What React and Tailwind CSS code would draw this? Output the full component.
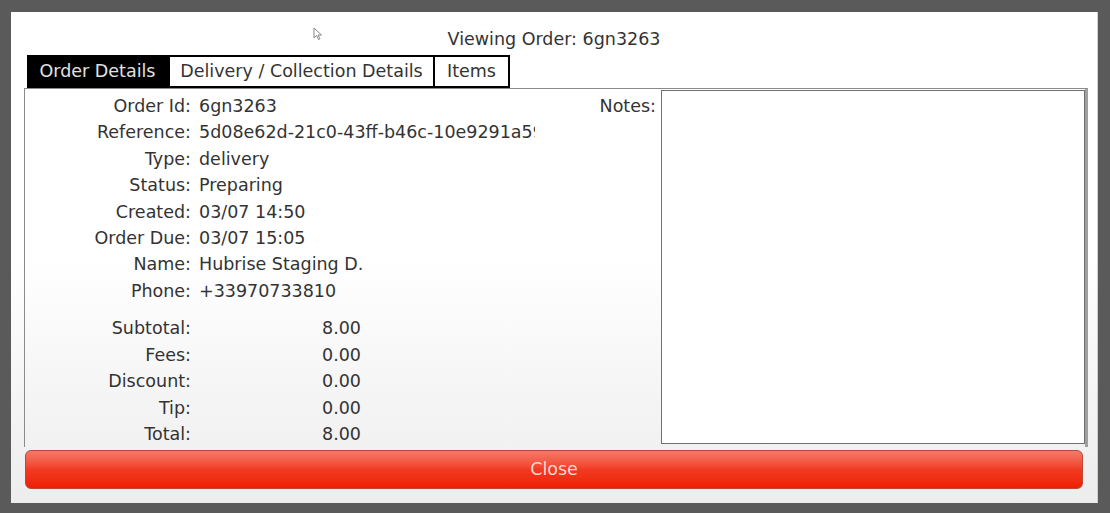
import React from "react";

const details = [
    ["Order Id:", "6gn3263"],
    ["Reference:", "5d08e62d-21c0-43ff-b46c-10e9291a59"],
    ["Type:", "delivery"],
    ["Status:", "Preparing"],
    ["Created:", "03/07 14:50"],
    ["Order Due:", "03/07 15:05"],
    ["Name:", "Hubrise Staging D."],
    ["Phone:", "+33970733810"],
];

const totals = [
    ["Subtotal:", "8.00"],
    ["Fees:", "0.00"],
    ["Discount:", "0.00"],
    ["Tip:", "0.00"],
    ["Total:", "8.00"],
];

function Cursor() {
    return (
        <svg className="absolute left-[302px] top-[15px]" width="10" height="14" viewBox="0 0 10 14">
            <path d="M1 1 L1 11 L3.5 8.5 L5.5 12.5 L7 11.8 L5 8 L8.5 8 Z" fill="white" stroke="#888" strokeWidth="1" />
        </svg>
    );
}

export default function App() {
    return (
        <div
            className="w-[1110px] h-[513px] bg-[#5a5a5a] pt-[12px] pl-[11px] pr-[12px] pb-[10px] text-[#333]"
            style={{ fontFamily: '"DejaVu Sans", Verdana, sans-serif' }}
        >
            <div className="relative h-[491px] flex flex-col bg-gradient-to-b from-white via-white to-[#ededed] border-r-[1px] border-r-[#cfcfcf]">
                <Cursor />

                {/* Title */}
                <div className="h-[43px] flex items-center justify-center pt-[12px] text-[17.5px]">
                    Viewing Order: 6gn3263
                </div>

                {/* Tabs */}
                <div className="h-[33px] flex pl-[16px] text-[17.5px]">
                    <div className="w-[141px] h-[33px] bg-black text-[#e2e2e2] flex items-center justify-center">
                        Order Details
                    </div>
                    <div className="w-[267px] h-[33px] bg-white border-2 border-black flex items-center justify-center">
                        Delivery / Collection Details
                    </div>
                    <div className="w-[75px] h-[33px] bg-white border-2 border-l-0 border-black flex items-center justify-center">
                        Items
                    </div>
                </div>

                {/* Panel */}
                <div className="h-[359px] ml-[13px] mr-[9px] flex border-t border-l border-[#8a8a8a] border-r-[3px] border-r-[#a0a0a0] pt-[1px] pb-[3px] text-[17.5px]">
                    <div className="w-[512px] pt-[3px]">
                        {details.map(([label, value]) => (
                            <div key={label} className="flex h-[26.4px] items-center">
                                <span className="w-[166px] text-right">{label}</span>
                                <span className="ml-[8px] w-[336px] overflow-hidden whitespace-nowrap">{value}</span>
                            </div>
                        ))}
                        <div className="h-[11px]" />
                        {totals.map(([label, value]) => (
                            <div key={label} className="flex h-[26.5px] items-center">
                                <span className="w-[166px] text-right">{label}</span>
                                <span className="ml-[8px] w-[162px] text-right">{value}</span>
                            </div>
                        ))}
                    </div>
                    <div className="flex-1 text-right pr-[5px] pt-[3px] leading-[26px]">Notes:</div>
                    <div className="w-[424px] h-full bg-white border border-[#707070]" />
                </div>

                {/* Close button */}
                <div className="mt-[3px] mx-[14px] h-[39px] rounded-[6px] border border-[#b84a3a] bg-gradient-to-b from-[#f27a68] via-[#f23a22] to-[#ee1e00] flex items-center justify-center text-[17.5px] text-[#fcd8cf]">
                    Close
                </div>
            </div>
        </div>
    );
}
